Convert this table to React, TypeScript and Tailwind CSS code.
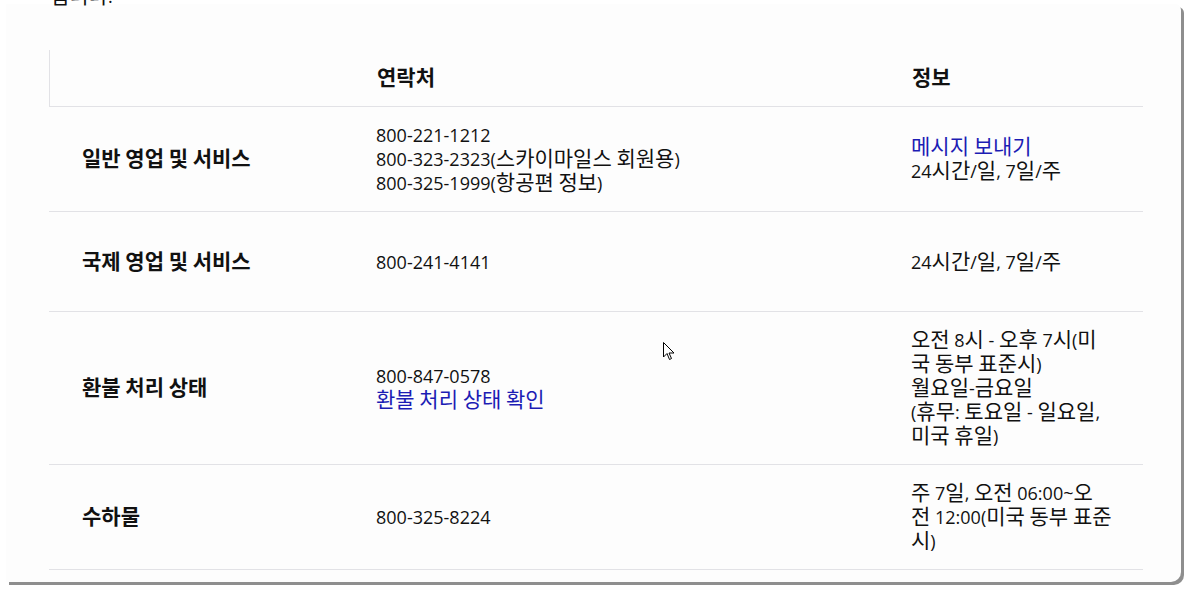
import React from 'react'

const font = { fontFamily: '"Open Sans", "Noto Sans CJK KR", sans-serif' }

// Hangul runs get a slightly larger size so they sit as wide as the screenshot's glyphs
function K({ children }: { children: string }) {
  const parts = children.split(/([\uAC00-\uD7A3]+)/)
  return (
    <>
      {parts.map((p, i) =>
        /[\uAC00-\uD7A3]/.test(p) ? (
          <span key={i} className="text-[21px] leading-none">{p}</span>
        ) : (
          <React.Fragment key={i}>{p}</React.Fragment>
        )
      )}
    </>
  )
}

type Row = {
  label: string
  contact: string[]
  link?: string
  info: string[]
  infoLink?: string
}

const rows: Row[] = [
  {
    label: '일반 영업 및 서비스',
    contact: ['800-221-1212', '800-323-2323(스카이마일스 회원용)', '800-325-1999(항공편 정보)'],
    infoLink: '메시지 보내기',
    info: ['24시간/일, 7일/주'],
  },
  {
    label: '국제 영업 및 서비스',
    contact: ['800-241-4141'],
    info: ['24시간/일, 7일/주'],
  },
  {
    label: '환불 처리 상태',
    contact: ['800-847-0578'],
    link: '환불 처리 상태 확인',
    info: ['오전 8시 - 오후 7시(미국 동부 표준시)', '월요일-금요일', '(휴무: 토요일 - 일요일, 미국 휴일)'],
  },
  {
    label: '수하물',
    contact: ['800-325-8224'],
    info: ['주 7일, 오전 06:00~오전 12:00(미국 동부 표준시)'],
  },
]

function Cursor() {
  return (
    <svg className="absolute left-[663px] top-[342px]" width="12" height="19" viewBox="0 0 12 19">
      <path d="M0.5 0.5 L0.5 15 L4 11.5 L6.5 17.5 L8.5 16.5 L6 11 L11 11 Z" fill="#fff" stroke="#000" strokeWidth="1" />
    </svg>
  )
}

export default function App() {
  return (
    <div className="relative w-[1188px] h-[590px] bg-white overflow-hidden text-[#111] text-[18px] leading-6" style={font}>
      <div className="flow-root ml-[6px] mt-[4px] w-[1175px] h-[578px] bg-[#fdfdfd] rounded-tr-[6px] rounded-br-[10px] shadow-[3px_3px_0_#8e8e8e]">
        {/* intro line, scrolled mostly out of view */}
        <p className="ml-[44px] -mt-[20px] h-[66px]"><K>입니다.</K></p>

        <div className="ml-[43px] w-[1094px]">
          {/* header */}
          <div className="grid grid-cols-[294px_535px_265px] border-l border-b border-[#e2e2e6] font-bold">
            <div className="py-4" />
            <div className="py-4 pl-[33px]"><K>연락처</K></div>
            <div className="py-4 pl-[33px]"><K>정보</K></div>
          </div>

          {rows.map(r => (
            <div key={r.label} className="grid grid-cols-[294px_535px_265px] border-b border-[#e2e2e6] min-h-[100px] items-center">
              <div className="py-4 pl-[33px] font-bold"><K>{r.label}</K></div>
              <div className="py-4 pl-[33px]">
                {r.contact.map(c => <div key={c}><K>{c}</K></div>)}
                {r.link && <div className="text-[#1c1cb4]"><K>{r.link}</K></div>}
              </div>
              <div className="py-4 pl-[33px] pr-[31px]">
                {r.infoLink && <div className="text-[#1c1cb4]"><K>{r.infoLink}</K></div>}
                {r.info.map(c => <div key={c}><K>{c}</K></div>)}
              </div>
            </div>
          ))}
        </div>
      </div>
      <Cursor />
    </div>
  )
}
